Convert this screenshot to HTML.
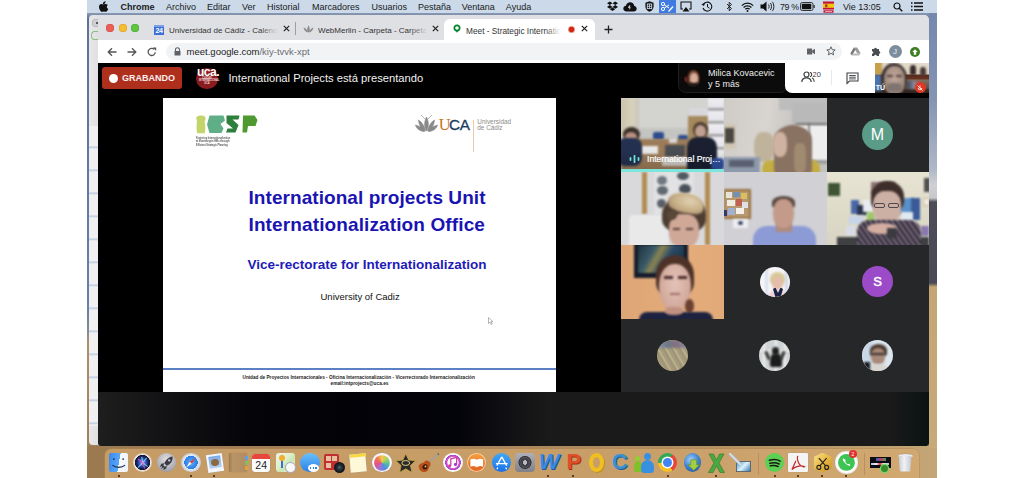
<!DOCTYPE html>
<html><head><meta charset="utf-8">
<style>
*{margin:0;padding:0;box-sizing:border-box}
html,body{width:1024px;height:478px;overflow:hidden;background:#fff;font-family:"Liberation Sans",sans-serif}
.a{position:absolute}
.b{filter:blur(1.3px)}
.t{overflow:hidden}
.tt{top:10.5px;font-size:8.2px;line-height:10px;white-space:nowrap;overflow:hidden}
#desk{left:87px;top:0;width:850px;height:478px;background:linear-gradient(90deg,#9c7a50 0,#a4805a 300px,#b49262 650px,#c4a676 850px);overflow:hidden}
#menubar{left:87px;top:0;width:850px;height:13px;background:#cbd9e9;color:#1a1a1a;font-size:9px;line-height:13px;white-space:nowrap}
#menubar span{position:absolute;top:1px}
#chrome{left:98px;top:15px;width:831px;height:431px;background:#dfe0e4;border-radius:5px 5px 4px 4px;overflow:hidden}
#tabbar{left:0;top:0;width:831px;height:25px;background:#dfe0e4}
#toolbar{left:0;top:25px;width:831px;height:23px;background:#fff}
#meet{left:0;top:48px;width:831px;height:383px;background:#000;overflow:hidden}
#dock{left:105px;top:449px;width:814px;height:40px;background:linear-gradient(90deg,#c69c66,#c89e68 60%,#d0a870);border-radius:6px 6px 0 0;box-shadow:0 0 0 0.5px #b08850}
</style></head>
<body>
<div id="desk" class="a"></div>
<div class="a" style="left:87px;top:13px;width:850px;height:433px;background:linear-gradient(#8898b2 0,#8090ac 2px,#5d7298 6px,#6a7fa4 300px,#8a8a90 318px,#b09068 330px,#a08058 433px)"></div>
<div class="a" style="left:89px;top:15px;width:14px;height:430px;background:linear-gradient(90deg,#e8e8ea,#dcdcde);border-radius:4px 0 0 4px"></div>
<div class="a" style="left:91.5px;top:19px;width:8px;height:8px;border-radius:50%;background:#d0d0d2;box-shadow:inset 0 0 0 0.5px #aaa"></div><div class="a" style="left:96px;top:22px;width:2px;height:2px;border-radius:50%;background:#333"></div>
<div class="a" style="left:91px;top:31px;width:7px;height:9px;border-radius:50% 0 0 50%;border:1.5px solid #8abf80;border-right:none"></div>
<div class="a" style="left:89px;top:126px;width:9px;height:300px;background:repeating-linear-gradient(#f0f0f2 0,#f0f0f2 20px,#b8c8e0 21px,#f0f0f2 23px)"></div>
<div class="a" style="left:929px;top:13px;width:8px;height:435px;background:linear-gradient(#7488ad 0,#8494b4 87px,#b0b8c8 157px,#cfd0d4 172px,#c8c8cc 185px,#4e4e5a 189px,#4a4a56 270px,#c4a674 274px,#c8aa78 433px)"></div>
<div id="menubar" class="a">
  <svg class="a" style="left:12px;top:1px" width="10" height="11" viewBox="0 0 10 11"><path d="M6.6 0.2c0.1 0.9-0.3 1.7-0.8 2.2-0.5 0.5-1.2 0.9-1.9 0.8-0.1-0.8 0.3-1.6 0.8-2.1C5.2 0.6 5.9 0.2 6.6 0.2zM8.9 3.9C8.2 4.3 7.8 5 7.8 5.8c0 1 0.6 1.8 1.5 2.1-0.2 0.6-0.5 1.1-0.9 1.6-0.5 0.7-1 1.3-1.8 1.3-0.7 0-1-0.4-1.8-0.4-0.8 0-1.1 0.4-1.8 0.4-0.8 0-1.3-0.7-1.8-1.4C0.4 8.4-0.1 6.9 0 5.5c0.1-1.6 1.1-2.6 2.3-2.6 0.8 0 1.4 0.5 1.9 0.5 0.5 0 1.2-0.5 2-0.5 0.7 0 1.9 0.3 2.7 1z" fill="#111"/></svg>
  <span style="left:33.5px;font-weight:bold">Chrome</span>
  <span style="left:79px">Archivo</span>
  <span style="left:120px">Editar</span>
  <span style="left:155px">Ver</span>
  <span style="left:180px">Historial</span>
  <span style="left:225px">Marcadores</span>
  <span style="left:284.5px">Usuarios</span>
  <span style="left:331px">Pestaña</span>
  <span style="left:374.7px">Ventana</span>
  <span style="left:418.8px">Ayuda</span>
  <!-- status icons -->
  <svg class="a" style="left:520px;top:1px" width="11" height="11" viewBox="0 0 11 11"><path d="M2.8 0.5L0 2.3l2.8 1.8 2.7-1.8zM8.2 0.5L5.5 2.3l2.7 1.8 2.8-1.8zM0 5.9l2.8 1.8 2.7-1.8-2.7-1.8zM8.2 4.1L5.5 5.9l2.7 1.8 2.8-1.8zM2.8 8.3l2.7 1.8 2.7-1.8-2.7-1.8z" fill="#111"/></svg>
  <svg class="a" style="left:536px;top:2px" width="14" height="10" viewBox="0 0 14 10"><path d="M3.5 9.5C1.6 9.5 0.3 8.3 0.3 6.6c0-1.5 1.1-2.7 2.6-2.9C3.4 1.6 5.1 0.3 7.1 0.3c2.2 0 4 1.6 4.2 3.7 1.4 0.2 2.4 1.3 2.4 2.7 0 1.6-1.2 2.8-2.9 2.8z" fill="#111"/><path d="M6 3.5h1.5L6.7 5.5h1.5L5.8 8l0.7-2H5z" fill="#cbd9e9"/></svg>
  <svg class="a" style="left:558px;top:1px" width="9" height="11" viewBox="0 0 9 11"><path d="M4.5 0.3L8.6 1.8v3.6c0 2.6-1.8 4.5-4.1 5.3C2.2 9.9 0.4 8 0.4 5.4V1.8z" fill="#111"/><rect x="2.3" y="3" width="4.4" height="4.6" fill="none" stroke="#cbd9e9" stroke-width="0.9"/><path d="M4.5 3v4.6M2.3 5.3h4.4" stroke="#cbd9e9" stroke-width="0.8"/></svg>
  <div class="a" style="left:571.5px;top:0;width:17px;height:13px;background:#3f7be0"></div>
  <svg class="a" style="left:573px;top:1px" width="14" height="11" viewBox="0 0 14 11"><circle cx="3" cy="3" r="1.6" fill="none" stroke="#fff" stroke-width="1"/><circle cx="3" cy="8" r="1.6" fill="none" stroke="#fff" stroke-width="1"/><path d="M4.3 3.8L9 7M4.3 7.2L9 4" stroke="#fff" stroke-width="1"/><path d="M8.5 9.5l4-4.5 1 1-4 4.5-1.5 0.3z" fill="#fff"/></svg>
  <svg class="a" style="left:593px;top:1px" width="12" height="11" viewBox="0 0 12 11"><path d="M3 8H1V1h10v7H9" fill="none" stroke="#111" stroke-width="1.1"/><path d="M6 6l3.5 4.5h-7z" fill="#111"/></svg>
  <svg class="a" style="left:614px;top:1px" width="12" height="11" viewBox="0 0 12 11"><path d="M2.3 3.5A4.5 4.5 0 1 1 2 7" fill="none" stroke="#111" stroke-width="1.1"/><path d="M0.3 3.2l2.6 1.8 1.2-3z" fill="#111"/><path d="M6.5 3v3l2 1.2" fill="none" stroke="#111" stroke-width="1"/></svg>
  <svg class="a" style="left:639px;top:1px" width="7" height="11" viewBox="0 0 7 11"><path d="M1 3l4.5 4.5-2.3 2.3V1.2l2.3 2.3L1 8" fill="none" stroke="#111" stroke-width="0.9"/></svg>
  <svg class="a" style="left:654px;top:1.5px" width="13" height="10" viewBox="0 0 13 10"><path d="M0.8 3.6a8 8 0 0 1 11.4 0M2.6 5.5a5.4 5.4 0 0 1 7.8 0M4.4 7.3a2.8 2.8 0 0 1 4.2 0" fill="none" stroke="#111" stroke-width="1.3"/><circle cx="6.5" cy="9" r="0.9" fill="#111"/></svg>
  <svg class="a" style="left:673px;top:1px" width="15" height="11" viewBox="0 0 15 11"><path d="M0.5 3.5h2.5L6.5 0.5v10L3 7.5H0.5z" fill="#111"/><path d="M8.5 3.5c0.8 0.6 0.8 3.4 0 4M10.3 2c1.6 1.2 1.6 5.8 0 7M12.1 0.8c2.3 1.8 2.3 7.6 0 9.4" fill="none" stroke="#111" stroke-width="0.9"/></svg>
  <span style="left:693px;font-size:8.8px;letter-spacing:-0.3px">79 %</span>
  <svg class="a" style="left:713px;top:2px" width="15" height="9" viewBox="0 0 15 9"><rect x="0.5" y="0.5" width="12.5" height="8" rx="1.8" fill="none" stroke="#333" stroke-width="1"/><rect x="1.8" y="1.8" width="9.5" height="5.4" rx="0.8" fill="#111"/><rect x="13.5" y="3" width="1.3" height="3" fill="#333"/></svg>
  <svg class="a" style="left:736px;top:1px" width="11" height="12" viewBox="0 0 11 12"><rect x="0" y="0.5" width="11" height="2.3" fill="#c8102e"/><rect x="0" y="2.8" width="11" height="4" fill="#f5c400"/><rect x="0" y="6.8" width="11" height="1.7" fill="#c8102e"/><rect x="2" y="3.3" width="2.5" height="3" fill="#b24020"/><rect x="0.5" y="9.3" width="10" height="2.4" fill="#c8102e"/><path d="M2 10.5h7" stroke="#fff" stroke-width="0.6"/></svg>
  <span style="left:756px">Vie 13:05</span>
  <svg class="a" style="left:806px;top:1.5px" width="10" height="10" viewBox="0 0 10 10"><circle cx="4" cy="4" r="3" fill="none" stroke="#111" stroke-width="1.2"/><path d="M6.2 6.2L9.3 9.3" stroke="#111" stroke-width="1.4"/></svg>
  <svg class="a" style="left:824px;top:2px" width="12" height="9" viewBox="0 0 12 9"><path d="M0 1h1.5M0 4.5h1.5M0 8h1.5M3 1h9M3 4.5h9M3 8h9" stroke="#111" stroke-width="1.4"/></svg>
</div>

<div id="chrome" class="a">
  <div id="tabbar" class="a">
    <div class="a" style="left:8px;top:9px;width:8px;height:8px;border-radius:50%;background:#ec5f56;box-shadow:inset 0 0 0 0.5px #d14c42"></div>
    <div class="a" style="left:20.5px;top:9px;width:8px;height:8px;border-radius:50%;background:#f4bd32;box-shadow:inset 0 0 0 0.5px #d9a120"></div>
    <div class="a" style="left:33px;top:9px;width:8px;height:8px;border-radius:50%;background:#5fc43f;box-shadow:inset 0 0 0 0.5px #4aa82f"></div>
    <!-- tab1 -->
    <div class="a" style="left:56px;top:11px;width:10px;height:9px;background:#3d6fd8;color:#fff;font-size:7px;font-weight:bold;line-height:10px;text-align:center;letter-spacing:-0.3px">24</div>
    <div class="a" style="left:56px;top:10px;width:10px;height:2px;background:#7aa0ea"></div>
    <div class="a tt" style="left:71px;width:108px;color:#333;font-size:8px">Universidad de Cádiz - Calend<span style="color:#aaa">a</span></div>
    <div class="a" style="left:162px;top:7px;width:18px;height:14px;background:linear-gradient(90deg,rgba(223,224,228,0),#dfe0e4)"></div>
    <svg class="a" style="left:185px;top:10px" width="7" height="7" viewBox="0 0 7 7"><path d="M0.8 0.8l5.4 5.4M6.2 0.8L0.8 6.2" stroke="#222" stroke-width="1.2"/></svg>
    <div class="a" style="left:197px;top:7px;width:1px;height:13px;background:#9c9ea2"></div>
    <!-- tab2 -->
    <svg class="a" style="left:204.5px;top:10px" width="11" height="8" viewBox="0 0 11 8"><path d="M5.5 7.5C4 6 3.5 3.5 5.5 0.5 7.5 3.5 7 6 5.5 7.5zM5 7.5C3 7.2 1 5.5 0.5 2.5 3 3.5 4.5 5 5 7.5zM6 7.5C8 7.2 10 5.5 10.5 2.5 8 3.5 6.5 5 6 7.5z" fill="#8c8c8c"/></svg>
    <div class="a tt" style="left:220px;width:108px;color:#333;font-size:8px">WebMerlin - Carpeta - Carpeta</div>
    <div class="a" style="left:312px;top:7px;width:18px;height:14px;background:linear-gradient(90deg,rgba(223,224,228,0),#dfe0e4)"></div>
    <svg class="a" style="left:333.5px;top:10px" width="7" height="7" viewBox="0 0 7 7"><path d="M0.8 0.8l5.4 5.4M6.2 0.8L0.8 6.2" stroke="#222" stroke-width="1.2"/></svg>
    <!-- active tab -->
    <div class="a" style="left:345.5px;top:3.5px;width:151px;height:22px;background:#fff;border-radius:6px 6px 0 0"></div>
    <svg class="a" style="left:355px;top:9px" width="8" height="9" viewBox="0 0 8 9"><path d="M4 0.5C2 0.5 0.5 2 0.5 4c0 1.7 1.1 3 2.6 3.4L4 8.8l0.9-1.4C6.4 7 7.5 5.7 7.5 4 7.5 2 6 0.5 4 0.5z" fill="#00832d"/><circle cx="4" cy="4" r="1.8" fill="#fff"/></svg>
    <div class="a tt" style="left:368px;width:94px;color:#333;font-size:8.3px">Meet - Strategic Internationa</div>
    <div class="a" style="left:447px;top:7px;width:16px;height:14px;background:linear-gradient(90deg,rgba(255,255,255,0),#fff)"></div>
    <div class="a" style="left:469.5px;top:11px;width:7px;height:7px;border-radius:50%;background:radial-gradient(circle,#d02810 0,#d02810 45%,#e88a80 60%,#f0b0a8 100%)"></div>
    <svg class="a" style="left:482.5px;top:10px" width="7" height="7" viewBox="0 0 7 7"><path d="M0.8 0.8l5.4 5.4M6.2 0.8L0.8 6.2" stroke="#222" stroke-width="1.2"/></svg>
    <svg class="a" style="left:505.5px;top:9.5px" width="9" height="9" viewBox="0 0 9 9"><path d="M4.5 0.5v8M0.5 4.5h8" stroke="#222" stroke-width="1.3"/></svg>
  </div>
  <div id="toolbar" class="a">
    <svg class="a" style="left:9px;top:6.5px" width="10" height="10" viewBox="0 0 10 10"><path d="M9.5 5H1.2M5 1.2L1.2 5 5 8.8" fill="none" stroke="#555" stroke-width="1.3"/></svg>
    <svg class="a" style="left:29px;top:6.5px" width="10" height="10" viewBox="0 0 10 10"><path d="M0.5 5h8.3M5 1.2L8.8 5 5 8.8" fill="none" stroke="#555" stroke-width="1.3"/></svg>
    <svg class="a" style="left:49px;top:6.5px" width="10" height="10" viewBox="0 0 10 10"><path d="M8.3 5.3A3.6 3.6 0 1 1 7.2 2.3" fill="none" stroke="#555" stroke-width="1.3"/><path d="M5.8 0.6h3.4v3.4z" fill="#555"/></svg>
    <div class="a" style="left:68px;top:3px;width:676px;height:17px;border-radius:9px;background:#f1f3f4"></div>
    <svg class="a" style="left:76px;top:6.5px" width="7" height="9" viewBox="0 0 7 9"><path d="M1.5 4V2.8C1.5 1.4 2.4 0.7 3.5 0.7S5.5 1.4 5.5 2.8V4" fill="none" stroke="#5f6368" stroke-width="1.1"/><rect x="0.5" y="4" width="6" height="4.6" rx="0.6" fill="#5f6368"/></svg>
    <div class="a" style="left:88.6px;top:5px;font-size:9.5px;line-height:13px;color:#202124;white-space:nowrap">meet.google.com<span style="color:#6b6e72">/kiy-tvvk-xpt</span></div>
    <svg class="a" style="left:709px;top:7.5px" width="8" height="7" viewBox="0 0 8 7"><rect x="0" y="0.5" width="5.2" height="6" rx="0.5" fill="#5f6368"/><path d="M5.2 2.5L8 0.8v5.4L5.2 4.5z" fill="#5f6368"/></svg>
    <svg class="a" style="left:727.5px;top:6px" width="10" height="10" viewBox="0 0 10 10"><path d="M5 0.8l1.2 2.8 3 0.3-2.3 2 0.7 3L5 7.3 2.4 8.9l0.7-3-2.3-2 3-0.3z" fill="none" stroke="#5f6368" stroke-width="1"/></svg>
    <svg class="a" style="left:752px;top:6.5px" width="11" height="9" viewBox="0 0 11 9"><path d="M3.8 0.5h3.4l3.5 6h-3.4z" fill="#9a9a9a"/><path d="M3.8 0.5L0.3 6.5 2 8.5 5.5 2.5z" fill="#7a7a7a"/><path d="M2 8.5h7L10.7 6.5H3.7z" fill="#b8b8b8"/></svg>
    <svg class="a" style="left:773px;top:6px" width="10" height="10" viewBox="0 0 10 10"><path d="M1 3h2.2a1.3 1.3 0 1 1 2.6 0H8v2.2a1.3 1.3 0 1 1 0 2.6V10H5.8a1.3 1.3 0 1 0-2.6 0H1V7.8a1.3 1.3 0 1 0 0-2.6z" fill="#4a4d52"/></svg>
    <div class="a" style="left:790.5px;top:4.5px;width:13px;height:13px;border-radius:50%;background:#7c8e9c;color:#eef;font-size:8px;line-height:13px;text-align:center">J</div>
    <div class="a" style="left:812px;top:6.5px;width:10px;height:10px;border-radius:50%;background:#3c7e21"></div>
    <svg class="a" style="left:814px;top:8.5px" width="6" height="6" viewBox="0 0 6 6"><path d="M3 0.3L5.7 3H4.2v2.7H1.8V3H0.3z" fill="#fff"/></svg>
  </div>

  <div id="meet" class="a">
    <!-- header -->
    <div class="a" style="left:4px;top:4px;width:80px;height:22px;border-radius:3px;background:#ad2f1c"></div>
    <div class="a" style="left:10.5px;top:10.5px;width:9px;height:9px;border-radius:50%;background:#fff"></div>
    <div class="a" style="left:24px;top:10px;font-size:9px;font-weight:bold;line-height:11px;color:#fbeeee;white-space:nowrap">GRABANDO</div>
    <div class="a" style="left:98px;top:4.8px;width:21.6px;height:21.6px;border-radius:50%;background:#8a1c20"></div>
    <div class="a" style="left:99px;top:3.2px;font-size:12px;font-weight:bold;color:#fff;line-height:12px;letter-spacing:-0.5px">uca.</div>
    <div class="a" style="left:101px;top:14.5px;font-size:2.6px;font-weight:bold;color:#f0d8d8;line-height:2.9px;text-align:center;width:16px;white-space:nowrap;letter-spacing:-0.1px">CIUDAD<br>INTERNACIONAL<br>UCA</div>
    <div class="a" style="left:130.5px;top:8px;font-size:11.2px;line-height:14px;color:#f2f2f2;white-space:nowrap">International Projects está presentando</div>
    <!-- right header -->
    <div class="a" style="left:580px;top:-6px;width:110px;height:36px;border-radius:8px;background:#0b0b0b;border:1px solid #1e1e1e"></div>
    <div class="a" style="left:586px;top:6px;width:18px;height:18px;border-radius:50%;overflow:hidden;background:#100a08"><div class="a b" style="left:4px;top:1px;width:11px;height:15px;border-radius:50% 50% 30% 30%;background:#7a4a30"></div><div class="a b" style="left:6px;top:4px;width:8px;height:11px;border-radius:45%;background:#d8b0a0"></div><div class="a b" style="left:4px;top:14px;width:11px;height:6px;background:#201818"></div><div class="a b" style="left:0px;top:8px;width:4px;height:5px;background:#6a2a20"></div></div>
    <div class="a" style="left:610px;top:4.5px;font-size:9px;line-height:11px;color:#eee;white-space:nowrap">Milica Kovacevic</div>
    <div class="a" style="left:610px;top:15.5px;font-size:9px;line-height:11px;color:#eee;white-space:nowrap">y 5 más</div>
    <div class="a" style="left:687px;top:-6px;width:100px;height:36px;border-radius:0 0 0 7px;background:#fff"></div>
    <svg class="a" style="left:703px;top:8px" width="14" height="12" viewBox="0 0 14 12"><circle cx="5.5" cy="3.5" r="2.5" fill="none" stroke="#3c4043" stroke-width="1.2"/><path d="M0.8 11c0-2.5 2-4.2 4.7-4.2s4.7 1.7 4.7 4.2" fill="none" stroke="#3c4043" stroke-width="1.2"/><path d="M9 1.2a2.4 2.4 0 0 1 0 4.6M11 6.8c1.3 0.6 2.2 2 2.2 4" fill="none" stroke="#3c4043" stroke-width="1.1"/></svg>
    <div class="a" style="left:714.5px;top:7px;font-size:7.5px;line-height:9px;color:#3c4043">20</div>
    <div class="a" style="left:732.5px;top:7px;width:1px;height:15px;background:#e8e8e8"></div>
    <svg class="a" style="left:748px;top:8.5px" width="13" height="13" viewBox="0 0 13 13"><path d="M1 1h11v8H3.5L1 11.5z" fill="none" stroke="#3c4043" stroke-width="1.1"/><path d="M3.2 3.5h6.6M3.2 5.2h6.6M3.2 6.9h6.6" stroke="#3c4043" stroke-width="0.9"/></svg>
    <!-- self view -->
    <div class="a" style="left:776.8px;top:0;width:54.2px;height:30px;overflow:hidden;background:linear-gradient(#e2dccc 0,#ddd4c0 11px,#5a2a1a 12px,#6a3420 16px,#807060 17px,#605048 25px,#3a2a20 27px,#2a2420 30px)">
      <div class="a b" style="left:-2px;top:-2px;width:9px;height:14px;background:#c8a04a"></div>
      <div class="a b" style="left:-2px;top:12px;width:9px;height:16px;background:#4a74b0"></div>
      <div class="a b" style="left:35px;top:2px;width:6px;height:10px;border-radius:40% 40% 10% 10%;background:#3a2a2a"></div>
      <div class="a b" style="left:45px;top:4px;width:6px;height:9px;border-radius:40% 40% 10% 10%;background:#4a3a3a"></div>
      <div class="a b" style="left:33px;top:18px;width:12px;height:8px;background:linear-gradient(90deg,#3a4a60,#8a8aa0,#c04030)"></div>
      <div class="a b" style="left:6px;top:0px;width:26px;height:30px;border-radius:50% 50% 40% 40%;background:#3a3030"></div>
      <div class="a b" style="left:9px;top:3px;width:21px;height:28px;border-radius:45% 45% 40% 40%;background:radial-gradient(ellipse at 50% 40%,#c0a89c 0,#a89284 50%,#807068 100%)"></div>
      <div class="a b" style="left:12px;top:12px;width:6px;height:2px;background:#5a4040"></div>
      <div class="a b" style="left:21px;top:12px;width:6px;height:2px;background:#5a4040"></div>
      <div class="a b" style="left:12px;top:20px;width:15px;height:9px;border-radius:40%;background:#807470"></div>
      <div class="a" style="left:1px;top:20.5px;font-size:7px;font-weight:bold;color:#fff;line-height:8px">TÚ</div>
      <div class="a" style="left:40px;top:19px;width:11px;height:11px;border-radius:50%;background:#dc3a26"></div>
      <svg class="a" style="left:42.5px;top:21.5px" width="6" height="6" viewBox="0 0 6 6"><path d="M3 0.5v3M1.2 3a1.8 1.8 0 0 0 3.6 0M0.5 0.5l5 5" stroke="#fff" stroke-width="0.8" fill="none"/></svg>
    </div>
    <div class="a" id="slide" style="left:65px;top:35px;width:393px;height:294px;background:#fff;overflow:hidden">
      <!-- ICSP logo -->
      <svg class="a" style="left:32px;top:16px" width="64" height="34" viewBox="0 0 64 34">
        <path d="M2 2.5c2-1.5 6-1.5 8 0 1 2 0.5 4-0.5 5 1 2 1 8 0.5 11-0.5 0 0 0.5 0 0.5l-0.5 0.2c-3 0.3-5.5 0-7.5-0.3C1.5 15 1.5 9 2 7 1 5 1 3.5 2 2.5z" fill="#c5d46a"/>
        <path d="M14.5 1.5h14l1.5 5-4.5 3.5 3 4.5-2 4.5h-12l-2.5-8.5z" fill="#5fae88"/>
        <path d="M31.5 1.5h13l-1 4h-6l6 5.5-3 7.5H31l1.5-4h5.5l-6.5-5.5z" fill="#2f7f3c"/>
        <path d="M48 1.5h11.5l3 4.5-2 6H53l-1 6.5h-4.5z" fill="#4f9a30"/>
        
      </svg>
      <div class="a" style="left:33px;top:38.5px;font-size:3.4px;line-height:3.65px;color:#555;white-space:nowrap;font-weight:bold;transform:scaleX(0.72);transform-origin:0 0">Fostering Internationalization<br>at Montenegrin HEIs through<br>Efficient Strategic Planning</div>
      <!-- UCA logo -->
      <svg class="a" style="left:252px;top:16px" width="23" height="19" viewBox="0 0 23 19"><path d="M11.5 17C9 13 9 8 11.5 3 14 8 14 13 11.5 17zM10.5 17C7 16 4 12 3.5 6 7 8 9.5 12 10.5 17zM12.5 17C16 16 19 12 19.5 6 16 8 13.5 12 12.5 17zM9.5 17.5C5.5 17.5 1.5 15 0.5 11 4 12 8 14 9.5 17.5zM13.5 17.5C17.5 17.5 21.5 15 22.5 11 19 12 15 14 13.5 17.5zM6 1l4 4M17 1l-4 4" fill="#8a8a8a" stroke="#8a8a8a" stroke-width="0.6"/></svg>
      <div class="a" style="left:275.8px;top:17.5px;font-family:'Liberation Serif',serif;font-size:16.5px;line-height:17px;color:#c8741a">U</div>
      <div class="a" style="left:286px;top:18.5px;font-size:15.3px;line-height:16px;color:#173b60;letter-spacing:-0.4px;-webkit-text-stroke:0.3px #173b60">CA</div>
      <div class="a" style="left:310px;top:22px;width:1px;height:32px;background:#ecc9a9"></div>
      <div class="a" style="left:314.3px;top:20.5px;font-size:6.4px;line-height:6px;color:#8a8a8a">Universidad</div>
      <div class="a" style="left:314.3px;top:27px;font-size:6.4px;line-height:6px;color:#8a8a8a">de Cádiz</div>
      <!-- titles -->
      <div class="a" style="left:85.5px;top:89px;font-size:19px;font-weight:bold;line-height:21px;color:#1a14b2;white-space:nowrap;letter-spacing:0.06px">International projects Unit</div>
      <div class="a" style="left:85.5px;top:115.5px;font-size:19px;font-weight:bold;line-height:21px;color:#1a14b2;white-space:nowrap;letter-spacing:0.12px">Internationalization Office</div>
      <div class="a" style="left:84.5px;top:158.5px;font-size:13.5px;font-weight:bold;line-height:16px;color:#1e1cb8;white-space:nowrap">Vice-rectorate for Internationalization</div>
      <div class="a" style="left:157.5px;top:193px;font-size:9.5px;line-height:11px;color:#111;white-space:nowrap">University of Cadiz</div>
      <svg class="a" style="left:325px;top:219px" width="6" height="8" viewBox="0 0 6 8"><path d="M0.5 0.5v6l1.5-1.5 1.2 2.5 1-0.5-1.2-2.3h2z" fill="#fff" stroke="#888" stroke-width="0.6"/></svg>
      <div class="a" style="left:0;top:270px;width:393px;height:1.6px;background:#5b80c4"></div>
      <div class="a" style="left:79.5px;top:276.5px;font-size:4.7px;font-weight:bold;line-height:6px;color:#222;white-space:nowrap">Unidad de Proyectos Internacionales - Oficina Internacionalización - Vicerrectorado Internacionalización</div>
      <div class="a" style="left:167.5px;top:283px;font-size:4.8px;font-weight:bold;line-height:6px;color:#222;white-space:nowrap">email:intprojects@uca.es</div>
    </div>
    <div class="a" id="grid" style="left:523px;top:35px;width:308px;height:294px;background:#262729;overflow:hidden">
      <!-- tile1 conference -->
      <div class="a t" style="left:0;top:0;width:103px;height:74px;background:#d3d3d0">
        <div class="a b" style="left:0;top:0;width:18px;height:40px;background:linear-gradient(90deg,#c9c2a8,#d8d2bc 60%,#c8c6bc)"></div>
        <div class="a b" style="left:18px;top:30px;width:52px;height:12px;background:#c4c4c2"></div>
        <div class="a b" style="left:68px;top:10px;width:22px;height:10px;background:#d8d8dc"></div>
        <div class="a b" style="left:67px;top:18px;width:21px;height:28px;background:#a5895c"></div>
        <div class="a b" style="left:87px;top:0;width:16px;height:62px;background:repeating-linear-gradient(#eeeef2 0,#e4e4ea 10px,#707070 11px,#e4e4ea 13px)"></div>
        <div class="a b" style="left:32px;top:34px;width:11px;height:8px;border-radius:2px;background:#2e4c8c"></div>
        <div class="a b" style="left:57px;top:37px;width:10px;height:9px;border-radius:2px;background:#2e4c8c"></div>
        <div class="a b" style="left:0;top:41px;width:78px;height:33px;background:#9c7c58;border-radius:10px 10px 0 0"></div>
        <div class="a b" style="left:20px;top:48px;width:17px;height:8px;background:#e8e8e8"></div>
        <div class="a b" style="left:44px;top:47px;width:20px;height:12px;background:#4a4d52"></div>
        <div class="a b" style="left:48px;top:40px;width:8px;height:5px;background:#d8d8d8"></div>
        <div class="a b" style="left:41px;top:59px;width:30px;height:9px;background:#d0cdc8"></div>
        <div class="a b" style="left:2px;top:29px;width:17px;height:15px;border-radius:50%;background:#3a302a"></div>
        <div class="a b" style="left:4px;top:34px;width:12px;height:11px;border-radius:50%;background:#b89080"></div>
        <div class="a b" style="left:-4px;top:40px;width:25px;height:28px;border-radius:8px;background:#243050"></div>
        <div class="a b" style="left:72px;top:24px;width:15px;height:16px;border-radius:50%;background:#4a3a30"></div>
        <div class="a b" style="left:74px;top:27px;width:11px;height:13px;border-radius:50%;background:#c0a090"></div>
        <div class="a b" style="left:66px;top:39px;width:30px;height:33px;border-radius:10px 10px 0 0;background:#1a2030"></div>
        <div class="a b" style="left:90px;top:60px;width:13px;height:12px;background:#3050a0;border-radius:4px"></div>
        <div class="a" style="left:0;top:52px;width:103px;height:19px;background:linear-gradient(rgba(0,0,0,0),rgba(0,0,0,0.15))"></div>
        <svg class="a" style="left:8px;top:57px" width="11" height="8" viewBox="0 0 11 8"><path d="M1.5 3v2M5.5 0.8v6.4M9.5 3v2" stroke="#6ee0d2" stroke-width="1.8" stroke-linecap="round"/></svg>
        <div class="a" style="left:26px;top:56px;font-size:8.6px;line-height:10px;color:#fff;white-space:nowrap;-webkit-text-stroke:0.2px #fff">International Proj…</div>
        <div class="a" style="left:0;top:70.5px;width:103px;height:3.5px;background:#7de6dc"></div>
      </div>
      <!-- tile2 long hair woman -->
      <div class="a t" style="left:103px;top:0;width:103px;height:74px;background:linear-gradient(100deg,#cfccc8 0,#d8d4d0 40%,#c4c2c0 70%)">
        <div class="a b" style="left:55px;top:-4px;width:50px;height:16px;background:#bdbdbd"></div>
        <div class="a b" style="left:68px;top:5px;width:36px;height:24px;background:repeating-linear-gradient(#b4b4b4 0,#c2c2c2 2px,#aaaaaa 3px)"></div>
        <div class="a b" style="left:73px;top:27px;width:31px;height:38px;background:#eeeeee"></div>
        <div class="a b" style="left:84px;top:25px;width:2px;height:40px;background:#888"></div>
        <div class="a b" style="left:72px;top:25px;width:32px;height:2px;background:#777"></div>
        <div class="a b" style="left:72px;top:62px;width:32px;height:4px;background:#9a9a9a"></div>
        <div class="a b" style="left:0;top:26px;width:12px;height:25px;background:#cfc6b4"></div>
        <div class="a b" style="left:1px;top:30px;width:9px;height:15px;background:#4a4640"></div>
        <div class="a b" style="left:30px;top:34px;width:20px;height:30px;border-radius:40%;background:#bcae94;opacity:0.85"></div>
        <div class="a b" style="left:-2px;top:59px;width:38px;height:17px;background:#8e9aac"></div>
        <div class="a b" style="left:5px;top:62px;width:25px;height:7px;background:#5a6070"></div>
        <div class="a b" style="left:38px;top:62px;width:58px;height:14px;border-radius:8px 8px 0 0;background:#c4ae44"></div><div class="a b" style="left:50px;top:27px;width:38px;height:50px;border-radius:50% 50% 20% 20% / 30% 30% 10% 10%;background:#8a7262"></div><div class="a b" style="left:70px;top:45px;width:12px;height:30px;border-radius:30%;background:#a08a70"></div>
        <div class="a b" style="left:49px;top:34px;width:14px;height:25px;border-radius:40%;background:#cfb2a2"></div>
        
      </div>
      <!-- tile3 M -->
      <div class="a" style="left:241px;top:21px;width:31px;height:31px;border-radius:50%;background:#5a9c88;color:#fff;font-size:16px;line-height:31px;text-align:center">M</div>
      <!-- tile4 short hair woman -->
      <div class="a t" style="left:0;top:74px;width:103px;height:73px;background:#d9d9dc">
        <div class="a b" style="left:33px;top:0;width:40px;height:43px;background:#e2e2e4"></div>
        <div class="a b" style="left:36px;top:4px;width:10px;height:9px;border-radius:50%;background:#707880"></div>
        <div class="a b" style="left:56px;top:0px;width:12px;height:8px;border-radius:50%;background:#505860"></div>
        <div class="a b" style="left:36px;top:14px;width:11px;height:9px;border-radius:50%;background:#606870"></div>
        <div class="a b" style="left:58px;top:12px;width:12px;height:10px;border-radius:50%;background:#4a5058"></div>
        <div class="a b" style="left:36px;top:27px;width:9px;height:9px;border-radius:50%;background:#5a6068"></div>
        <div class="a b" style="left:21px;top:0;width:5px;height:42px;background:#b28c52"></div>
        <div class="a b" style="left:84px;top:0;width:5px;height:73px;background:#b28c52"></div>
        <div class="a b" style="left:8px;top:43px;width:40px;height:32px;border-radius:4px;background:#e9e9ea"></div>
        <div class="a b" style="left:41px;top:24px;width:44px;height:36px;border-radius:50% 50% 35% 35%;background:#4e3e32"></div>
        <div class="a b" style="left:47px;top:21px;width:36px;height:20px;border-radius:50% 60% 30% 50%;background:radial-gradient(ellipse at 60% 40%,#e0d0b0 0,#c8b088 50%,#9a8060 100%);transform:rotate(8deg)"></div>
        <div class="a b" style="left:48px;top:42px;width:30px;height:34px;border-radius:40% 40% 45% 45%;background:#cfa898"></div>
        <div class="a b" style="left:46px;top:38px;width:10px;height:10px;border-radius:50%;background:#5a4838"></div>
        <div class="a b" style="left:52px;top:56px;width:7px;height:2px;background:#5a4038"></div>
        <div class="a b" style="left:65px;top:56px;width:7px;height:2px;background:#5a4038"></div>
      </div>
      <!-- tile5 man blue shirt -->
      <div class="a t" style="left:103px;top:74px;width:103px;height:73px;background:#d0d0d5">
        <div class="a b" style="left:0;top:17px;width:27px;height:30px;background:#9a7444"></div>
        <div class="a b" style="left:1px;top:19px;width:24px;height:26px;background:#b89a70"></div><div class="a" style="left:2px;top:20px;width:6px;height:6px;background:#e8e4d8;filter:blur(0.6px)"></div><div class="a" style="left:9px;top:20px;width:7px;height:5px;background:#7890b0;filter:blur(0.6px)"></div><div class="a" style="left:17px;top:21px;width:6px;height:6px;background:#d8c060;filter:blur(0.6px)"></div><div class="a" style="left:3px;top:28px;width:8px;height:6px;background:#f0ece4;filter:blur(0.6px)"></div><div class="a" style="left:12px;top:27px;width:6px;height:7px;background:#c06050;filter:blur(0.6px)"></div><div class="a" style="left:18px;top:30px;width:6px;height:6px;background:#e0e0e8;filter:blur(0.6px)"></div><div class="a" style="left:4px;top:36px;width:7px;height:7px;background:#a0b0d0;filter:blur(0.6px)"></div><div class="a" style="left:12px;top:36px;width:8px;height:6px;background:#f4f0e8;filter:blur(0.6px)"></div><div class="a" style="left:0px;top:38px;width:3px;height:6px;background:#303a70;filter:blur(0.6px)"></div>
        <div class="a b" style="left:9px;top:47px;width:15px;height:9px;background:#eeeef0"></div>
        <div class="a b" style="left:14px;top:49px;width:5px;height:4px;border-radius:50%;background:#303a60"></div>
        <div class="a b" style="left:29px;top:54px;width:63px;height:22px;border-radius:14px 14px 0 0;background:#8c9ad6"></div>
        <div class="a b" style="left:52px;top:50px;width:16px;height:10px;background:#b08c7c"></div>
        <div class="a b" style="left:48px;top:24px;width:23px;height:12px;border-radius:50% 50% 20% 20%;background:#5a4a40"></div>
        <div class="a b" style="left:49px;top:27px;width:21px;height:29px;border-radius:45%;background:#c49a8a"></div>
      </div>
      <!-- tile6 woman glasses -->
      <div class="a t" style="left:206px;top:74px;width:102px;height:73px;background:linear-gradient(#e8e4d4,#dedac8 60%,#d8d4c4)">
        <div class="a b" style="left:1px;top:11px;width:12px;height:13px;background:#3e5434"></div>
        <div class="a b" style="left:44px;top:10px;width:24px;height:12px;background:#8a7474"></div>
        <div class="a b" style="left:97px;top:6px;width:6px;height:14px;background:#505050"></div>
        <div class="a b" style="left:96px;top:26px;width:7px;height:8px;background:#f4ece4;border:1px solid #c8b898"></div>
        <div class="a b" style="left:24px;top:28px;width:8px;height:14px;background:#4a68a8"></div>
        <div class="a b" style="left:30px;top:33px;width:10px;height:10px;background:#2a3450"></div>
        <div class="a b" style="left:22px;top:44px;width:14px;height:8px;background:#c8d4e8"></div>
        <div class="a b" style="left:36px;top:28px;width:10px;height:12px;background:#e8ecf0"></div>
        <div class="a b" style="left:40px;top:40px;width:8px;height:12px;background:#a0c870"></div>
        <div class="a b" style="left:19px;top:54px;width:9px;height:10px;background:#d8dce8"></div>
        <div class="a b" style="left:72px;top:26px;width:14px;height:16px;background:#5a90c8"></div>
        <div class="a b" style="left:84px;top:26px;width:9px;height:22px;background:#3a5a98"></div>
        <div class="a b" style="left:74px;top:40px;width:12px;height:10px;background:#e0e8f0"></div>
        <div class="a b" style="left:94px;top:54px;width:8px;height:10px;background:#8a78b0"></div>
        <div class="a b" style="left:10px;top:65px;width:92px;height:10px;background:#3e4042"></div>
        <div class="a b" style="left:44px;top:9px;width:33px;height:30px;border-radius:50% 50% 30% 30%;background:#3e2e2a"></div>
        <div class="a b" style="left:46px;top:19px;width:28px;height:33px;border-radius:40% 40% 45% 45%;background:#cdb0a4"></div>
        <div class="a" style="left:47px;top:31px;width:11px;height:5px;border:1px solid #3a3440;border-radius:2px;filter:blur(0.5px);opacity:0.85"></div>
        <div class="a" style="left:61px;top:31px;width:11px;height:5px;border:1px solid #3a3440;border-radius:2px;filter:blur(0.5px);opacity:0.85"></div>
        <div class="a b" style="left:30px;top:48px;width:64px;height:28px;border-radius:12px 12px 0 0;background:repeating-linear-gradient(55deg,#3a3040 0,#3a3040 2.5px,#a8a0b0 3.5px,#3a3040 4.5px)"></div>
        <div class="a b" style="left:40px;top:51px;width:30px;height:11px;border-radius:50%;background:#d4aea0"></div>
        <div class="a b" style="left:60px;top:56px;width:10px;height:10px;background:#3a3a40"></div>
      </div>
      <!-- tile7 orange wall woman -->
      <div class="a t" style="left:0;top:147px;width:103px;height:74px;background:linear-gradient(90deg,#dea676,#e4ac7a 60%,#e2aa78)">
        <div class="a b" style="left:13px;top:-3px;width:54px;height:36px;background:#161c2a"></div>
        <div class="a b" style="left:17px;top:0;width:46px;height:28px;background:linear-gradient(120deg,#1e3040,#3a5a68 30%,#8a8450 42%,#2a4a68 60%,#182838)"></div>
        <div class="a b" style="left:35px;top:10px;width:38px;height:40px;border-radius:50% 50% 30% 30%;background:#4e3228"></div>
        <div class="a b" style="left:38px;top:19px;width:32px;height:48px;border-radius:45% 45% 50% 50%;background:radial-gradient(ellipse at 50% 40%,#e4c2b8 0,#d4ac9e 60%,#c09488 100%)"></div>
        <div class="a b" style="left:43px;top:31px;width:9px;height:2.5px;background:#4a3030"></div>
        <div class="a b" style="left:57px;top:31px;width:9px;height:2.5px;background:#4a3030"></div>
        <div class="a b" style="left:49px;top:48px;width:10px;height:2px;background:#a07068"></div>
        <div class="a b" style="left:64px;top:54px;width:9px;height:14px;border-radius:50%;background:#6a4030"></div>
        <div class="a b" style="left:18px;top:67px;width:74px;height:9px;border-radius:8px 8px 0 0;background:#1c2240"></div>
        <div class="a b" style="left:44px;top:62px;width:18px;height:8px;border-radius:40%;background:#c09080"></div>
      </div>
      <!-- photo avatars -->
      <div class="a" style="left:139px;top:168.5px;width:30px;height:30px;border-radius:50%;overflow:hidden;background:#f6f6f8">
        <div class="a b" style="left:5px;top:0;width:3px;height:31px;background:#d8e0ec"></div>
        <div class="a b" style="left:25px;top:0;width:3px;height:31px;background:#d0d8e8"></div>
        <div class="a b" style="left:10px;top:5px;width:15px;height:12px;border-radius:50% 50% 30% 30%;background:#d8c898"></div>
        <div class="a b" style="left:12px;top:10px;width:11px;height:13px;border-radius:45%;background:#e4bcaa"></div>
        <div class="a b" style="left:8px;top:23px;width:20px;height:10px;border-radius:8px 8px 0 0;background:repeating-linear-gradient(70deg,#e8b8c4 0,#f4e8ec 2px,#e8b8c4 3px)"></div>
        <div class="a" style="left:13px;top:21px;width:10px;height:10px;background:#1a2244;clip-path:polygon(0 15%,25% 0,50% 55%,75% 0,100% 15%,75% 100%,25% 100%)"></div>
      </div>
      <div class="a" style="left:241px;top:168px;width:31px;height:31px;border-radius:50%;background:#9b4bc8;color:#fff;font-size:13px;line-height:31px;text-align:center;-webkit-text-stroke:0.5px #fff">S</div>
      <div class="a" style="left:36px;top:242px;width:31px;height:31px;border-radius:50%;overflow:hidden;background:repeating-linear-gradient(60deg,#aaa080 0,#9c9274 3px,#c0b490 5px,#a09676 7px)">
        <div class="a b" style="left:0;top:0;width:31px;height:8px;background:linear-gradient(90deg,#909aa8,#6a7888,#8a7080,#8098a8)"></div>
      </div>
      <div class="a" style="left:138px;top:242px;width:31px;height:31px;border-radius:50%;overflow:hidden;background:#d0d4d6">
        <div class="a b" style="left:4px;top:0;width:2px;height:31px;background:#f0f2ea"></div>
        <div class="a b" style="left:16px;top:0;width:2px;height:31px;background:#eef0e8"></div>
        <div class="a b" style="left:25px;top:0;width:2px;height:31px;background:#eef0e8"></div>
        <div class="a b" style="left:0;top:10px;width:31px;height:2px;background:#e8eae4"></div>
        <div class="a b" style="left:13px;top:7px;width:7px;height:8px;border-radius:50%;background:#202020"></div>
        <div class="a b" style="left:11px;top:13px;width:12px;height:14px;border-radius:50% 50% 20% 20%;background:#1c1c1c"></div>
        <div class="a b" style="left:7px;top:11px;width:3px;height:9px;background:#303030;transform:rotate(-25deg)"></div>
        <div class="a b" style="left:22px;top:11px;width:3px;height:9px;background:#303030;transform:rotate(25deg)"></div>
      </div>
      <div class="a" style="left:241px;top:242px;width:31px;height:31px;border-radius:50%;overflow:hidden;background:#dce6ee">
        <div class="a b" style="left:0;top:0;width:10px;height:31px;background:#c8d8e8"></div>
        <div class="a b" style="left:8px;top:4px;width:17px;height:12px;border-radius:50% 50% 20% 20%;background:#4a3a30"></div>
        <div class="a b" style="left:9px;top:8px;width:14px;height:17px;border-radius:45%;background:#a88878"></div>
        <div class="a b" style="left:9px;top:13px;width:14px;height:2px;background:#3a3030"></div>
        <div class="a b" style="left:6px;top:24px;width:20px;height:10px;border-radius:6px 6px 0 0;background:#d8d4d0"></div>
        <div class="a b" style="left:2px;top:22px;width:6px;height:10px;background:#1a1a20"></div>
      </div>
    </div>

    <div class="a" style="left:0;top:329px;width:831px;height:54px;background:linear-gradient(90deg,#1e1e1e 0,#141416 60px,#050509 150px,#020207 250px,#03030a 360px,#0e0e12 400px,#1a1a1a 450px,#1a1a1a 790px,#101616 815px,#0a1212 831px)"></div>
  </div>
</div>
<div id="dock" class="a">
<div class="a" style="left:3.8px;top:3.9px;width:19.5px;height:19.5px"><div class="a" style="left:0;top:0;width:100%;height:100%;border-radius:2px;background:linear-gradient(100deg,#3a86ee 0,#58a8f8 52%,#f8fafc 52%,#eef2f8 100%);"></div><svg class="a" style="left:0;top:0" width="19.5" height="19.5" viewBox="0 0 20 20"><path d="M5 5.5v1.8M14.5 5.5v1.8" stroke="#1a2a50" stroke-width="1.3"/><path d="M3.5 12.5c3.5 3 9.5 3 13 0" fill="none" stroke="#1a2a50" stroke-width="1.1"/></svg></div>
<div class="a" style="left:27.9px;top:3.9px;width:19.5px;height:19.5px"><div class="a" style="left:0;top:0;width:100%;height:100%;border-radius:50%;background:radial-gradient(circle closest-side at 50% 50%,#f0f0ff 0,#c060e0 12%,#3060c0 35%,#1a2060 60%,#101838 78%,#f4ece0 82%,#d8c8b0 100%);"></div><svg class="a" style="left:0;top:0" width="19.5" height="19.5" viewBox="0 0 20 20"><path d="M10 10L5 15M10 10l5 4M10 10L9 4M10 10l4-5" stroke="#80e0f0" stroke-width="1.2" opacity="0.8"/><path d="M10 10L5 6M10 10l2 6" stroke="#e060c0" stroke-width="1.2" opacity="0.8"/></svg></div>
<div class="a" style="left:51.7px;top:3.9px;width:19.5px;height:19.5px"><div class="a" style="left:0;top:0;width:100%;height:100%;border-radius:50%;background:radial-gradient(circle at 50% 35%,#e0e0e4 0,#b0b0b8 60%,#808088 100%);"></div><svg class="a" style="left:0;top:0" width="19.5" height="19.5" viewBox="0 0 20 20"><path d="M16 3.5c-4 0.5-7 3.5-8.5 7l2.5 2.5c3.5-1.5 6.5-4.5 6-9.5zM7.5 10.5l-3 0.5-1.5 3 3-0.5zM10 13l-0.5 3-3 1.5 0.5-3zM6.5 12.5l-2.5 4 4-2.5z" fill="#3a3a42"/><circle cx="12.5" cy="7.5" r="1.2" fill="#c8c8d0"/></svg></div>
<div class="a" style="left:76.1px;top:3.9px;width:19.5px;height:19.5px"><div class="a" style="left:0;top:0;width:100%;height:100%;border-radius:50%;background:radial-gradient(circle closest-side,#5cb0f8 0,#2a7ae8 70%,#e8eef4 72%,#c8ccd4 100%);"></div><svg class="a" style="left:0;top:0" width="19.5" height="19.5" viewBox="0 0 20 20"><path d="M15 5l-4 6-2-2z" fill="#f03a30"/><path d="M5 15l4-6 2 2z" fill="#f4f4f4"/></svg></div>
<div class="a" style="left:99.9px;top:3.9px;width:19.5px;height:19.5px"><div class="a" style="left:2px;top:1px;width:16px;height:18px;background:#f4f6fa;transform:rotate(-8deg);box-shadow:0 0 1px #888"></div><div class="a" style="left:4px;top:3px;width:12px;height:12px;background:linear-gradient(#7aaae8,#b8d0f0);transform:rotate(-8deg)"></div><div class="a" style="left:6px;top:6px;width:8px;height:7px;border-radius:50%;background:#8a6a40;transform:rotate(-8deg)"></div></div>
<div class="a" style="left:124.1px;top:3.9px;width:17.5px;height:19.5px"><div class="a" style="left:0;top:0;width:100%;height:100%;border-radius:2px;background:linear-gradient(90deg,#9a7a50,#b89468 20%,#b08c60);box-shadow:0 0 1px #806040"></div><div class="a" style="left:16px;top:3px;width:3px;height:4px;background:#60a0e0"></div><div class="a" style="left:16px;top:8px;width:3px;height:4px;background:#80c060"></div><div class="a" style="left:16px;top:13px;width:3px;height:4px;background:#e0a040"></div></div>
<div class="a" style="left:147.4px;top:4.6px;width:17.5px;height:18px"><div class="a" style="left:0;top:0;width:100%;height:100%;border-radius:3px;background:#fbfbfb;box-shadow:0 0 1px #666"></div><div class="a" style="left:0;top:0;width:100%;height:5px;border-radius:3px 3px 0 0;background:#e8463c"></div><div class="a" style="left:0;top:5px;width:100%;font-size:10.5px;line-height:13px;text-align:center;color:#222">24</div></div>
<div class="a" style="left:170.8px;top:3.9px;width:19.5px;height:19.5px"><div class="a" style="left:0;top:0;width:100%;height:100%;border-radius:3px;background:linear-gradient(135deg,#f0f0e8 0,#e0f0d0 40%,#c8e8b0 60%,#f4f4f0 100%);"></div><div class="a" style="left:5px;top:2px;width:2px;height:13px;background:#3a70d0"></div><div class="a" style="left:3px;top:2px;width:6px;height:6px;border-radius:50%;background:#f0b030"></div><div class="a" style="left:10px;top:10px;width:9px;height:9px;border-radius:50%;background:#f8f8f8;box-shadow:0 0 0 1px #aab"></div></div>
<div class="a" style="left:194.5px;top:3.9px;width:20px;height:19.5px"><div class="a" style="left:0;top:0;width:100%;height:100%;border-radius:50%;background:linear-gradient(#6ac0fa,#2a80e8);border-radius:50% 50% 50% 50%"></div><div class="a" style="left:8px;top:11px;width:11px;height:8px;border-radius:50%;background:#fff"></div><div class="a" style="left:10px;top:14px;width:7px;height:2px;background:repeating-linear-gradient(90deg,#2a80e8 0,#2a80e8 1.5px,transparent 1.5px,transparent 2.7px)"></div></div>
<div class="a" style="left:219.2px;top:3.9px;width:20.5px;height:19.5px"><div class="a" style="left:0;top:1px;width:15px;height:16px;background:#c03030;border-radius:2px"></div><div class="a" style="left:2px;top:3px;width:5px;height:5px;background:#e8c0a0"></div><div class="a" style="left:8px;top:3px;width:5px;height:5px;background:#e8c0a0"></div><div class="a" style="left:2px;top:10px;width:5px;height:5px;background:#e8c0a0"></div><div class="a" style="left:10px;top:9px;width:11px;height:11px;border-radius:50%;background:radial-gradient(circle closest-side,#506070 0,#202830 50%,#101418 100%)"></div></div>
<div class="a" style="left:243.6px;top:3.9px;width:17.5px;height:19.5px"><div class="a" style="left:1px;top:1px;width:16px;height:18px;background:#fdf8d8;transform:rotate(-5deg);box-shadow:0 0 1px #999"></div><div class="a" style="left:1px;top:1px;width:16px;height:3px;background:#f8d840;transform:rotate(-5deg)"></div></div>
<div class="a" style="left:267.1px;top:3.9px;width:19.5px;height:19.5px"><div class="a" style="left:0;top:0;width:100%;height:100%;border-radius:50%;background:#f8f8f8;box-shadow:0 0 1px #888"></div><div class="a" style="left:0;top:0;width:100%;height:100%;border-radius:50%;background:conic-gradient(#f8c040,#a0d048,#40b0a0,#4080e0,#a060d0,#e04080,#f06040,#f8c040);transform:scale(0.78);opacity:0.9"></div></div>
<div class="a" style="left:289.6px;top:3.6px;width:21.5px;height:20px"><svg class="a" style="left:0;top:0" width="21.5" height="20" viewBox="0 0 22 20"><path d="M11 0.5l3 6.5 7 0.8-5.2 4.8 1.5 7L11 16l-6.3 3.6 1.5-7L1 7.8l7-0.8z" fill="#2a2a2a" stroke="#c8a840" stroke-width="0.8"/><ellipse cx="11" cy="10" rx="4" ry="2.5" fill="none" stroke="#e8d080" stroke-width="1"/></svg></div>
<div class="a" style="left:312.7px;top:3.1px;width:22px;height:21px"><svg class="a" style="left:0;top:0" width="22" height="21" viewBox="0 0 22 21"><path d="M21 1L11 10.5" stroke="#a0a0a0" stroke-width="1.5"/><path d="M19.5 0.5l2 2-1.5 0.5z" fill="#555"/><path d="M10.5 9c-1.5-1-3.5-0.5-4.5 1-0.5 0.8-1.5 1-2.5 1.2C1.5 11.8 0.5 13.5 0.8 15.5 1.2 18.5 4 20.5 7 20c2-0.3 3-1.5 3.5-3 0.3-1 0.5-2 1.3-2.7 1.2-1.2 1-3.5-0.3-4.5z" fill="#b85018"/><path d="M8 12c-1.5 0-3 1-3.5 2.5S5 17.5 7 17.5s3-2 2.5-3.5" fill="#3a1808"/><circle cx="7.5" cy="14.5" r="1" fill="#e0c080"/></svg></div>
<div class="a" style="left:338.4px;top:3.9px;width:19.5px;height:19.5px"><div class="a" style="left:0;top:0;width:100%;height:100%;border-radius:50%;background:radial-gradient(circle closest-side,#fff 0,#fff 55%,#e060c0 62%,#a040e0 80%,#f8f8f8 84%);"></div><svg class="a" style="left:0;top:0" width="19.5" height="19.5" viewBox="0 0 20 20"><path d="M8 13V6l6-1.5v7" fill="none" stroke="#d040a0" stroke-width="1.3"/><circle cx="6.8" cy="13.2" r="1.6" fill="#d040a0"/><circle cx="12.8" cy="11.7" r="1.6" fill="#a040d0"/></svg></div>
<div class="a" style="left:361.9px;top:3.9px;width:19.5px;height:19.5px"><div class="a" style="left:0;top:0;width:100%;height:100%;border-radius:50%;background:linear-gradient(#f8a040,#e06020);box-shadow:inset 0 0 0 1px #f8d0a0"></div><svg class="a" style="left:0;top:0" width="19.5" height="19.5" viewBox="0 0 20 20"><path d="M3.5 6.5c2-1 4.5-1 6.5 0.5v7.5c-2-1.5-4.5-1.5-6.5-0.5zM16.5 6.5c-2-1-4.5-1-6.5 0.5v7.5c2-1.5 4.5-1.5 6.5-0.5z" fill="#fff"/></svg></div>
<div class="a" style="left:386.8px;top:3.9px;width:19.5px;height:19.5px"><div class="a" style="left:0;top:0;width:100%;height:100%;border-radius:50%;background:linear-gradient(#40a8f8,#1a70e8);"></div><svg class="a" style="left:0;top:0" width="19.5" height="19.5" viewBox="0 0 20 20"><path d="M10 4l-5 9M10 4l5 9M4 11h12M6 15l-1 1.5M14 15l1 1.5" stroke="#fff" stroke-width="1.3"/></svg></div>
<div class="a" style="left:410.2px;top:3.9px;width:19.5px;height:19.5px"><div class="a" style="left:0;top:0;width:100%;height:100%;border-radius:4px;background:linear-gradient(#b0b0b8,#808088);"></div><div class="a" style="left:0;top:0;width:100%;height:100%;border-radius:50%;background:radial-gradient(circle closest-side,#b8b8c0 0,#b8b8c0 22%,#3a3a40 25%,#505058 55%,#2a2a30 62%,#707078 70%,transparent 72%);"></div></div>
<div class="a" style="left:433.5px;top:3.9px;width:19.5px;height:19.5px"><div class="a" style="left:0;top:-3px;width:100%;text-align:center;font-size:22px;font-weight:bold;font-style:italic;color:#3a8ae0;line-height:24px;text-shadow:1px 1px 0 #1a5aa8">W</div></div>
<div class="a" style="left:460.8px;top:3.9px;width:16px;height:19.5px"><div class="a" style="left:0;top:-3px;width:100%;text-align:center;font-size:22px;font-weight:bold;color:#e05028;line-height:24px;text-shadow:1px 1px 0 #a03010">P</div></div>
<div class="a" style="left:483.2px;top:3.9px;width:17px;height:19.5px"><div class="a" style="left:1px;top:0;width:15px;height:19px;border-radius:50%;border:4px solid #f0c020;box-shadow:1px 1px 0 #c09010"></div></div>
<div class="a" style="left:506.7px;top:3.9px;width:16px;height:19.5px"><div class="a" style="left:0;top:-3px;width:100%;text-align:center;font-size:22px;font-weight:bold;color:#3a90d0;line-height:24px;text-shadow:1px 1px 0 #1a60a0">C</div></div>
<div class="a" style="left:530.2px;top:3.9px;width:19.5px;height:19.5px"><div class="a" style="left:0;top:3px;width:5px;height:5px;border-radius:50%;background:#90d030"></div><div class="a" style="left:-1px;top:8px;width:8px;height:11px;border-radius:50% 50% 20% 20%;background:#80c028"></div><div class="a" style="left:9px;top:0;width:7px;height:7px;border-radius:50%;background:#3a90e0"></div><div class="a" style="left:6px;top:7px;width:13px;height:13px;border-radius:50% 50% 25% 25%;background:#3a90e0"></div></div>
<div class="a" style="left:552.8px;top:3.9px;width:19.5px;height:19.5px"><div class="a" style="left:0;top:0;width:100%;height:100%;border-radius:50%;background:conic-gradient(from 30deg,#e8453c 0 120deg,#f8c020 120deg 240deg,#34a853 240deg 360deg);"></div><div class="a" style="left:5px;top:5px;width:9.5px;height:9.5px;border-radius:50%;background:#4285f4;box-shadow:0 0 0 1.5px #fff"></div></div>
<div class="a" style="left:578.8px;top:4.1px;width:17.5px;height:19px"><div class="a" style="left:0;top:0;width:100%;height:100%;border-radius:50%;background:radial-gradient(circle at 40% 35%,#a0d0f8 0,#3a80d0 50%,#1a4a90 100%);"></div><svg class="a" style="left:0;top:0" width="19.5" height="19.5" viewBox="0 0 20 20"><path d="M7 7h6v5h3l-6 6-6-6h3z" fill="#a0d040" stroke="#608020" stroke-width="0.6"/></svg></div>
<div class="a" style="left:602.9px;top:3.6px;width:17px;height:20px"><svg class="a" style="left:0;top:0" width="17" height="20" viewBox="0 0 17 20"><path d="M1 1h4.5L8.5 7 11.5 1H16l-5 9 5.5 9.5H12L8.5 13 5 19.5H0.5L6 10z" fill="#4aa840" stroke="#2a7a28" stroke-width="0.6"/></svg></div>
<div class="a" style="left:623.5px;top:3.6px;width:22.5px;height:20px"><div class="a" style="left:7px;top:8px;width:15px;height:11px;background:linear-gradient(135deg,#40a0e0,#e0f0f8 50%,#3080c0);border:1px solid #606870"></div><div class="a" style="left:0;top:0;width:12px;height:12px;background:linear-gradient(45deg,transparent 40%,#b0b8c0 42%,#e0e4e8 50%,#b0b8c0 58%,transparent 60%)"></div></div>
<div class="a" style="left:659.8px;top:3.9px;width:19.5px;height:19.5px"><div class="a" style="left:0;top:0;width:100%;height:100%;border-radius:50%;background:#5cd052;"></div><svg class="a" style="left:0;top:0" width="19.5" height="19.5" viewBox="0 0 20 20"><path d="M4.5 7.5c4-1.3 8-1 11 0.8M5 10.5c3.5-1 6.5-0.7 9.5 0.8M5.5 13.2c3-0.8 5.5-0.5 8 0.6" fill="none" stroke="#1a1a1a" stroke-width="1.6" stroke-linecap="round"/></svg></div>
<div class="a" style="left:683.2px;top:3.9px;width:19.5px;height:19.5px"><div class="a" style="left:0;top:0;width:100%;height:100%;border-radius:1px;background:#f4f4f4;box-shadow:0 0 1px #888"></div><svg class="a" style="left:0;top:0" width="19.5" height="19.5" viewBox="0 0 20 20"><path d="M10 3c-1 3 0 6 2 9 2 2 4 2.5 5 2-2-1-5-1-8 0-3 1-5 3-5 3 1-2 3-6 4-9" fill="none" stroke="#c82828" stroke-width="1.2"/></svg></div>
<div class="a" style="left:707.5px;top:3.6px;width:19.5px;height:20px"><div class="a" style="left:1px;top:0;width:18px;height:20px;background:linear-gradient(135deg,#f8e090,#e8b840 50%,#c89020);clip-path:polygon(50% 0,100% 22%,100% 78%,50% 100%,0 78%,0 22%)"></div><svg class="a" style="left:0;top:0" width="19.5" height="20" viewBox="0 0 20 20"><path d="M6 5l7 8M14 5l-7 8" stroke="#222" stroke-width="1.2"/><circle cx="6" cy="14.5" r="2" fill="none" stroke="#222" stroke-width="1.2"/><circle cx="14" cy="14.5" r="2" fill="none" stroke="#222" stroke-width="1.2"/></svg></div>
<div class="a" style="left:731.0px;top:3.4px;width:20.5px;height:20.5px"><div class="a" style="left:0;top:0;width:100%;height:100%;border-radius:50%;background:#fff;box-shadow:0 0 0 1px #e8e8e8"></div><div class="a" style="left:0;top:0;width:100%;height:100%;border-radius:50%;background:#3ec454;transform:scale(0.8)"></div><svg class="a" style="left:0;top:0" width="20.5" height="20.5" viewBox="0 0 20 20"><path d="M7 6c-1 1 0 3 2 5s4 3 5 2l-1-1.5-1.5 0.5c-1-0.5-2-1.5-2.5-2.5l0.5-1.5z" fill="#fff"/></svg><div class="a" style="left:13px;top:-2px;width:8px;height:8px;border-radius:50%;background:#e03030;color:#fff;font-size:5px;line-height:8px;text-align:center">2</div></div>
<div class="a" style="left:764.5px;top:3.9px;width:21px;height:19.5px"><div class="a" style="left:0;top:4px;width:21px;height:11px;background:#0c0c14"></div><div class="a" style="left:6px;top:5px;width:10px;height:3px;background:linear-gradient(90deg,#3060c0,#c04060,#40a060)"></div><div class="a" style="left:1px;top:10px;width:18px;height:2.5px;background:linear-gradient(90deg,#a0c0f0,#f0f0f0 30%,#e03040 50%,#f0f0f0 70%,#c0c0c0)"></div><div class="a" style="left:11.5px;top:12.5px;width:7px;height:7px;border-radius:50%;background:#3a8a30;box-shadow:0 0 0 1.2px #70e060"></div></div>
<div class="a" style="left:791.5px;top:3.6px;width:17px;height:20px"><div class="a" style="left:1px;top:1px;width:15px;height:4px;border-radius:50%;background:#e8eaee;box-shadow:0 0 1px #888"></div><div class="a" style="left:2px;top:3px;width:13px;height:16px;border-radius:0 0 3px 3px;background:linear-gradient(90deg,#c8ccd4,#f0f2f4 40%,#c0c4cc);clip-path:polygon(0 0,100% 0,90% 100%,10% 100%)"></div></div>
<div class="a" style="left:12.5px;top:25.5px;width:2px;height:2px;border-radius:50%;background:#2a1e10"></div>
<div class="a" style="left:84.8px;top:25.5px;width:2px;height:2px;border-radius:50%;background:#2a1e10"></div>
<div class="a" style="left:108.3px;top:25.5px;width:2px;height:2px;border-radius:50%;background:#2a1e10"></div>
<div class="a" style="left:442.4px;top:25.5px;width:2px;height:2px;border-radius:50%;background:#2a1e10"></div>
<div class="a" style="left:466.8px;top:25.5px;width:2px;height:2px;border-radius:50%;background:#2a1e10"></div>
<div class="a" style="left:561.5px;top:25.5px;width:2px;height:2px;border-radius:50%;background:#2a1e10"></div>
<div class="a" style="left:610.0px;top:25.5px;width:2px;height:2px;border-radius:50%;background:#2a1e10"></div>
<div class="a" style="left:668.5px;top:25.5px;width:2px;height:2px;border-radius:50%;background:#2a1e10"></div>
<div class="a" style="left:692.0px;top:25.5px;width:2px;height:2px;border-radius:50%;background:#2a1e10"></div>
<div class="a" style="left:716.3px;top:25.5px;width:2px;height:2px;border-radius:50%;background:#2a1e10"></div>
<div class="a" style="left:739.8px;top:25.5px;width:2px;height:2px;border-radius:50%;background:#2a1e10"></div>
<div class="a" style="left:652.5px;top:4px;width:1px;height:22px;background:#b89060"></div>
<div class="a" style="left:758.8px;top:4px;width:1px;height:22px;background:#b89060"></div>
</div>
</body></html>
